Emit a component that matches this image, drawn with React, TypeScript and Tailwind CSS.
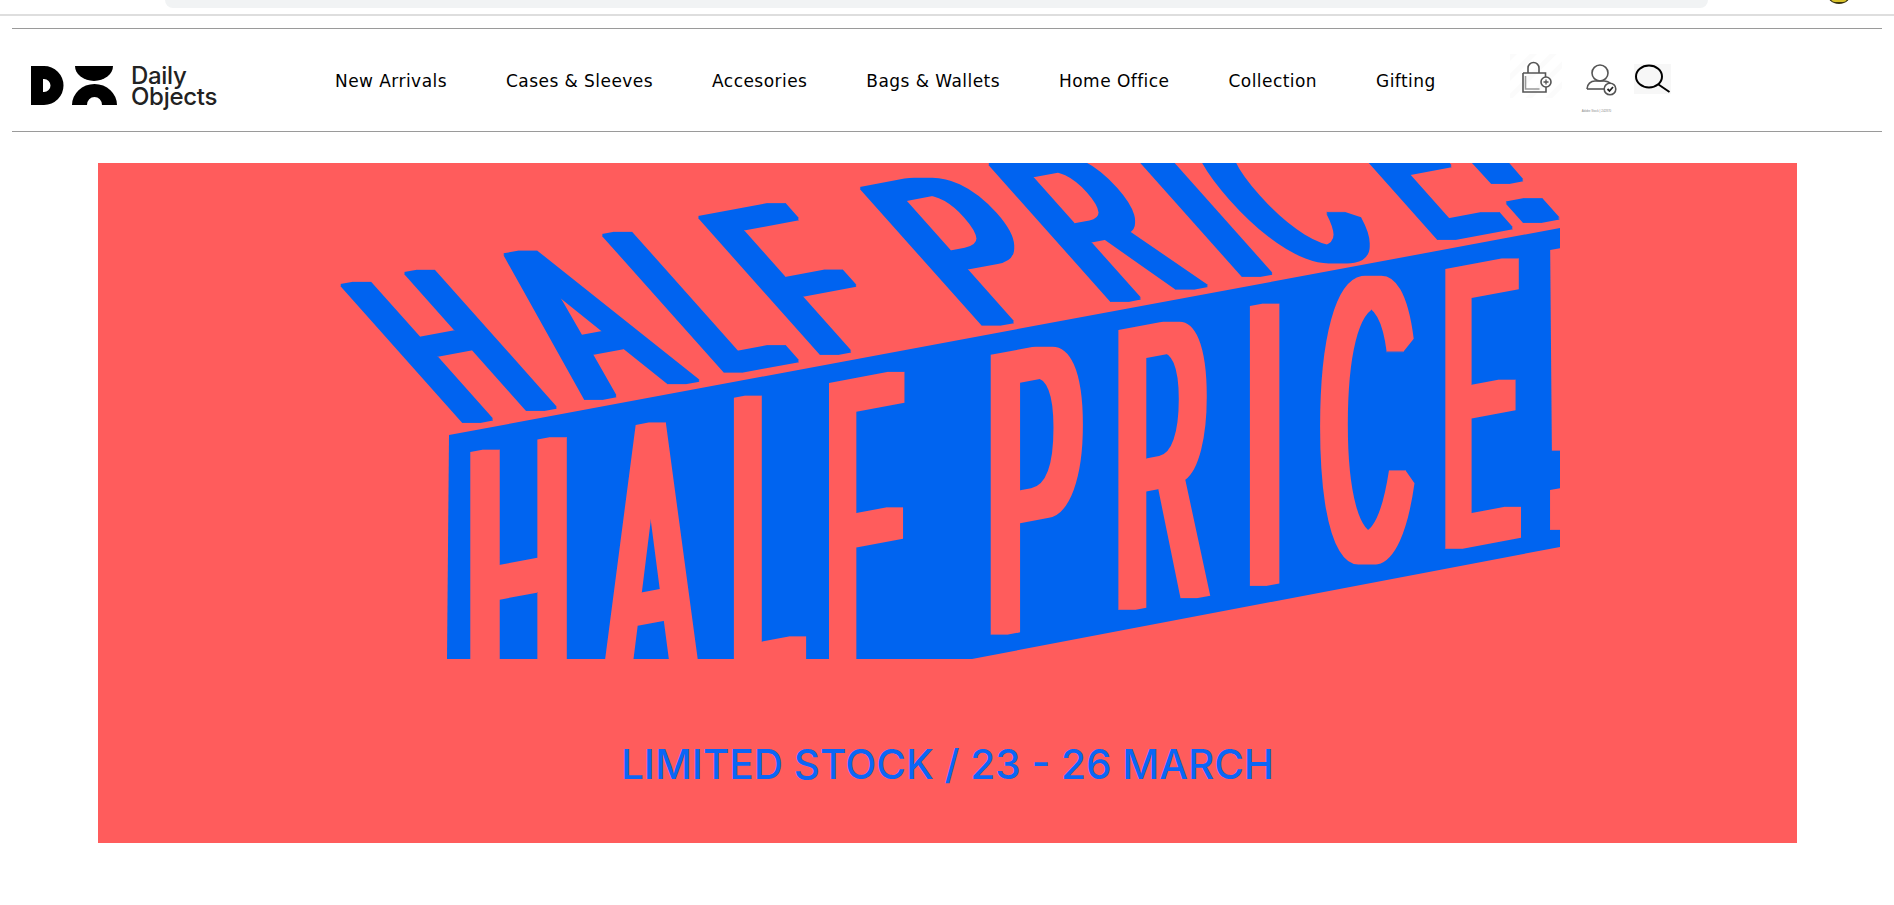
const NAV = ['New Arrivals', 'Cases & Sleeves', 'Accesories', 'Bags & Wallets', 'Home Office', 'Collection', 'Gifting'];

// Glyph box of Liberation Sans at 100 units: left bearing and ink width.
const GLYPH: Record<string, { lsb: number; w: number }> = {
  H: { lsb: 8, w: 56.2 },
  A: { lsb: 0, w: 66.8 },
  L: { lsb: 7.5, w: 44.7 },
  F: { lsb: 8.2, w: 48.5 },
  P: { lsb: 7.7, w: 54.5 },
  R: { lsb: 7.9, w: 62.6 },
  I: { lsb: 9.3, w: 9.7 },
  C: { lsb: 5, w: 63 },
  E: { lsb: 7.9, w: 53.6 },
  '!': { lsb: 9, w: 9.7 },
};

const SLOPE = -0.187;
const DILATE = 8;

// ch, left x and y of the glyph's bottom-left, ink width
type Letter = [string, number, number, number];

const UPPER: Letter[] = [
  ['H', 463, 422, 93],
  ['A', 585, 399, 114],
  ['L', 724, 372, 74],
  ['F', 821, 354, 85],
  ['P', 982, 325, 100],
  ['R', 1111, 301, 100],
  ['I', 1243, 276, 29],
  ['C', 1292, 268, 98],
  ['E', 1438, 239, 73],
  ['!', 1524, 222, 35],
];

const LOWER: Letter[] = [
  ['H', 470, 732, 97],
  ['A', 598, 712, 105],
  ['L', 733, 678, 73],
  ['F', 829, 663, 75],
  ['P', 990, 635, 94],
  ['R', 1118, 610, 96],
  ['I', 1250, 586, 30],
  ['C', 1320, 568, 94],
  ['E', 1445, 549, 75],
  ['!', 1550, 530, 30],
];

function Glyphs({ letters, c, d, fill, filter }: { letters: Letter[]; c: number; d: number; fill: string; filter: string }) {
  return (
    <g filter={filter} fill={fill} fontFamily="'Liberation Sans', sans-serif" fontSize="100">
      {letters.map(([ch, x, y, w]) => {
        const g = GLYPH[ch];
        const a = (w - DILATE * 2) / g.w;
        const b = SLOPE * a;
        const e = x + DILATE - g.lsb * a;
        const f = y - b * g.lsb;
        return (
          <text key={ch + x} transform={`matrix(${a} ${b} ${c} ${d} ${e} ${f})`}>
            {ch}
          </text>
        );
      })}
    </g>
  );
}

function HalfPriceArt() {
  return (
    <svg className="block h-[497px] w-[1699px]" viewBox="98 163 1699 497">
      <defs>
        <filter id="stem" x="-5%" y="-5%" width="110%" height="110%" filterUnits="objectBoundingBox">
          <feMorphology operator="dilate" radius="8 0" />
        </filter>
        <filter id="stem-up" x="-5%" y="-5%" width="110%" height="110%" filterUnits="objectBoundingBox">
          <feMorphology operator="dilate" radius="9 1" />
        </filter>
        <clipPath id="art">
          <rect x="300" y="163" width="1260" height="496" />
        </clipPath>
      </defs>
      <g clipPath="url(#art)">
        <Glyphs letters={UPPER} c={1.773} d={1.99} fill="#0064f0" filter="url(#stem-up)" />
        <polygon points="449,435 1560,228 1560,547 972,659 447,659" fill="#0064f0" />
        <Glyphs letters={LOWER} c={0} d={4.07} fill="#ff5c5c" filter="url(#stem)" />
      </g>
    </svg>
  );
}

function LogoMark() {
  return (
    <svg className="h-[40px] w-[86px]" viewBox="0 0 86 40">
      <path d="M0 0h13a19.500 19.500 0 0 1 0 39H0z M12 13v13h1a6.500 6.500 0 0 0 0-13z" fillRule="evenodd" fill="#000" />
      <path d="M44 0h38a19 15 0 0 1-38 0z" fill="#000" />
      <path d="M41 39a22.500 21 0 0 1 45 0H71a7.500 8 0 0 0-15 0z" fill="#000" />
    </svg>
  );
}

function BagIcon() {
  return (
    <svg className="mt-[-9px] h-[44px] w-[52px]" viewBox="0 0 52 44" fill="none" stroke="#555" strokeWidth="1.6">
      <defs>
        <pattern id="hatch" width="14" height="14" patternUnits="userSpaceOnUse" patternTransform="rotate(-45)">
          <rect width="14" height="5" fill="#fbfbfb" stroke="none" />
        </pattern>
      </defs>
      <rect width="52" height="44" fill="url(#hatch)" stroke="none" />
      <path d="M13 19h22.500v8" />
      <path d="M13 19v19h23v-5" />
      <path d="M15.500 22v13h14" stroke="#999" />
      <path d="M18 19v-5a5.500 5.500 0 0 1 11 0v5" />
      <circle cx="36" cy="28" r="5" fill="#fff" strokeWidth="1.600" />
      <path d="M33.500 28h5M36 25.500v5" strokeWidth="1.300" />
    </svg>
  );
}

function UserIcon() {
  return (
    <svg className="h-[32px] w-[34px]" viewBox="0 0 34 32" fill="none" stroke="#555" strokeWidth="1.6">
      <circle cx="15" cy="9" r="8" />
      <path d="M2 25c0-5 4-8 8-8h9c3 0 5 1 7 3" />
      <path d="M2 25h18" />
      <circle cx="25" cy="25" r="5.800" fill="#fff" strokeWidth="1.600" />
      <path d="M22.500 25l2 2 3.500-4" stroke="#222" strokeWidth="1.800" />
    </svg>
  );
}

function SearchIcon() {
  return (
    <svg className="h-[30px] w-[37px] bg-[#f7f7f7]" viewBox="0 0 37 30" fill="none" stroke="#000">
      <ellipse cx="15" cy="12.500" rx="13" ry="11" strokeWidth="2" />
      <path d="M24.500 20.500l11 7.500" strokeWidth="2" />
    </svg>
  );
}

export default function App() {
  return (
    <div className="h-[905px] overflow-hidden bg-white font-['Liberation_Sans',sans-serif]">
      <div className="relative h-[16px] border-b-2 border-[#dedede]">
        <div className="ml-[165px] h-[8px] w-[1543px] rounded-b-[16px] bg-[#f1f3f4]" />
        <div className="absolute -top-[22px] left-[1826px] h-[26px] w-[26px] rounded-full bg-[#3a3410]">
          <div className="mx-auto mt-[16px] h-[8px] w-[16px] rounded-full bg-[#d8c22a]" />
        </div>
      </div>

      <header className="mx-[12px] mt-[12px] flex h-[104px] items-center border-y border-[#9a9a9a]">
        <div className="ml-[19px] mt-[11px] flex w-[304px] items-center gap-[14px]">
          <LogoMark />
          <p className="font-['Inter',sans-serif] text-[24px] font-medium leading-[21px] tracking-[-0.3px] text-[#222]">
            Daily
            <br />
            Objects
          </p>
        </div>
        <nav className="mt-[3px] flex gap-[59px] font-['DejaVu_Sans',sans-serif] text-[17px] tracking-[0.45px] text-black">
          {NAV.map((n) => (
            <span key={n}>{n}</span>
          ))}
        </nav>
        <div className="ml-[74px] flex items-start">
          <BagIcon />
          <div className="relative ml-[23px] mt-[1px]">
            <UserIcon />
            <span className="absolute left-[-3px] top-[45px] whitespace-nowrap text-[3px] text-[#888]">Adobe Stock | 242870</span>
          </div>
          <div className="ml-[15px] mt-[1px]">
            <SearchIcon />
          </div>
        </div>
      </header>

      <section className="mx-[98px] mt-[31px] h-[680px] w-[1699px] bg-[#ff5c5c]">
        <HalfPriceArt />
        <p className="mt-[80px] text-center font-['Inter',sans-serif] text-[40.5px] font-medium leading-[50px] text-[#0a66f5]">
          LIMITED STOCK / 23 - 26 MARCH
        </p>
      </section>
    </div>
  );
}
